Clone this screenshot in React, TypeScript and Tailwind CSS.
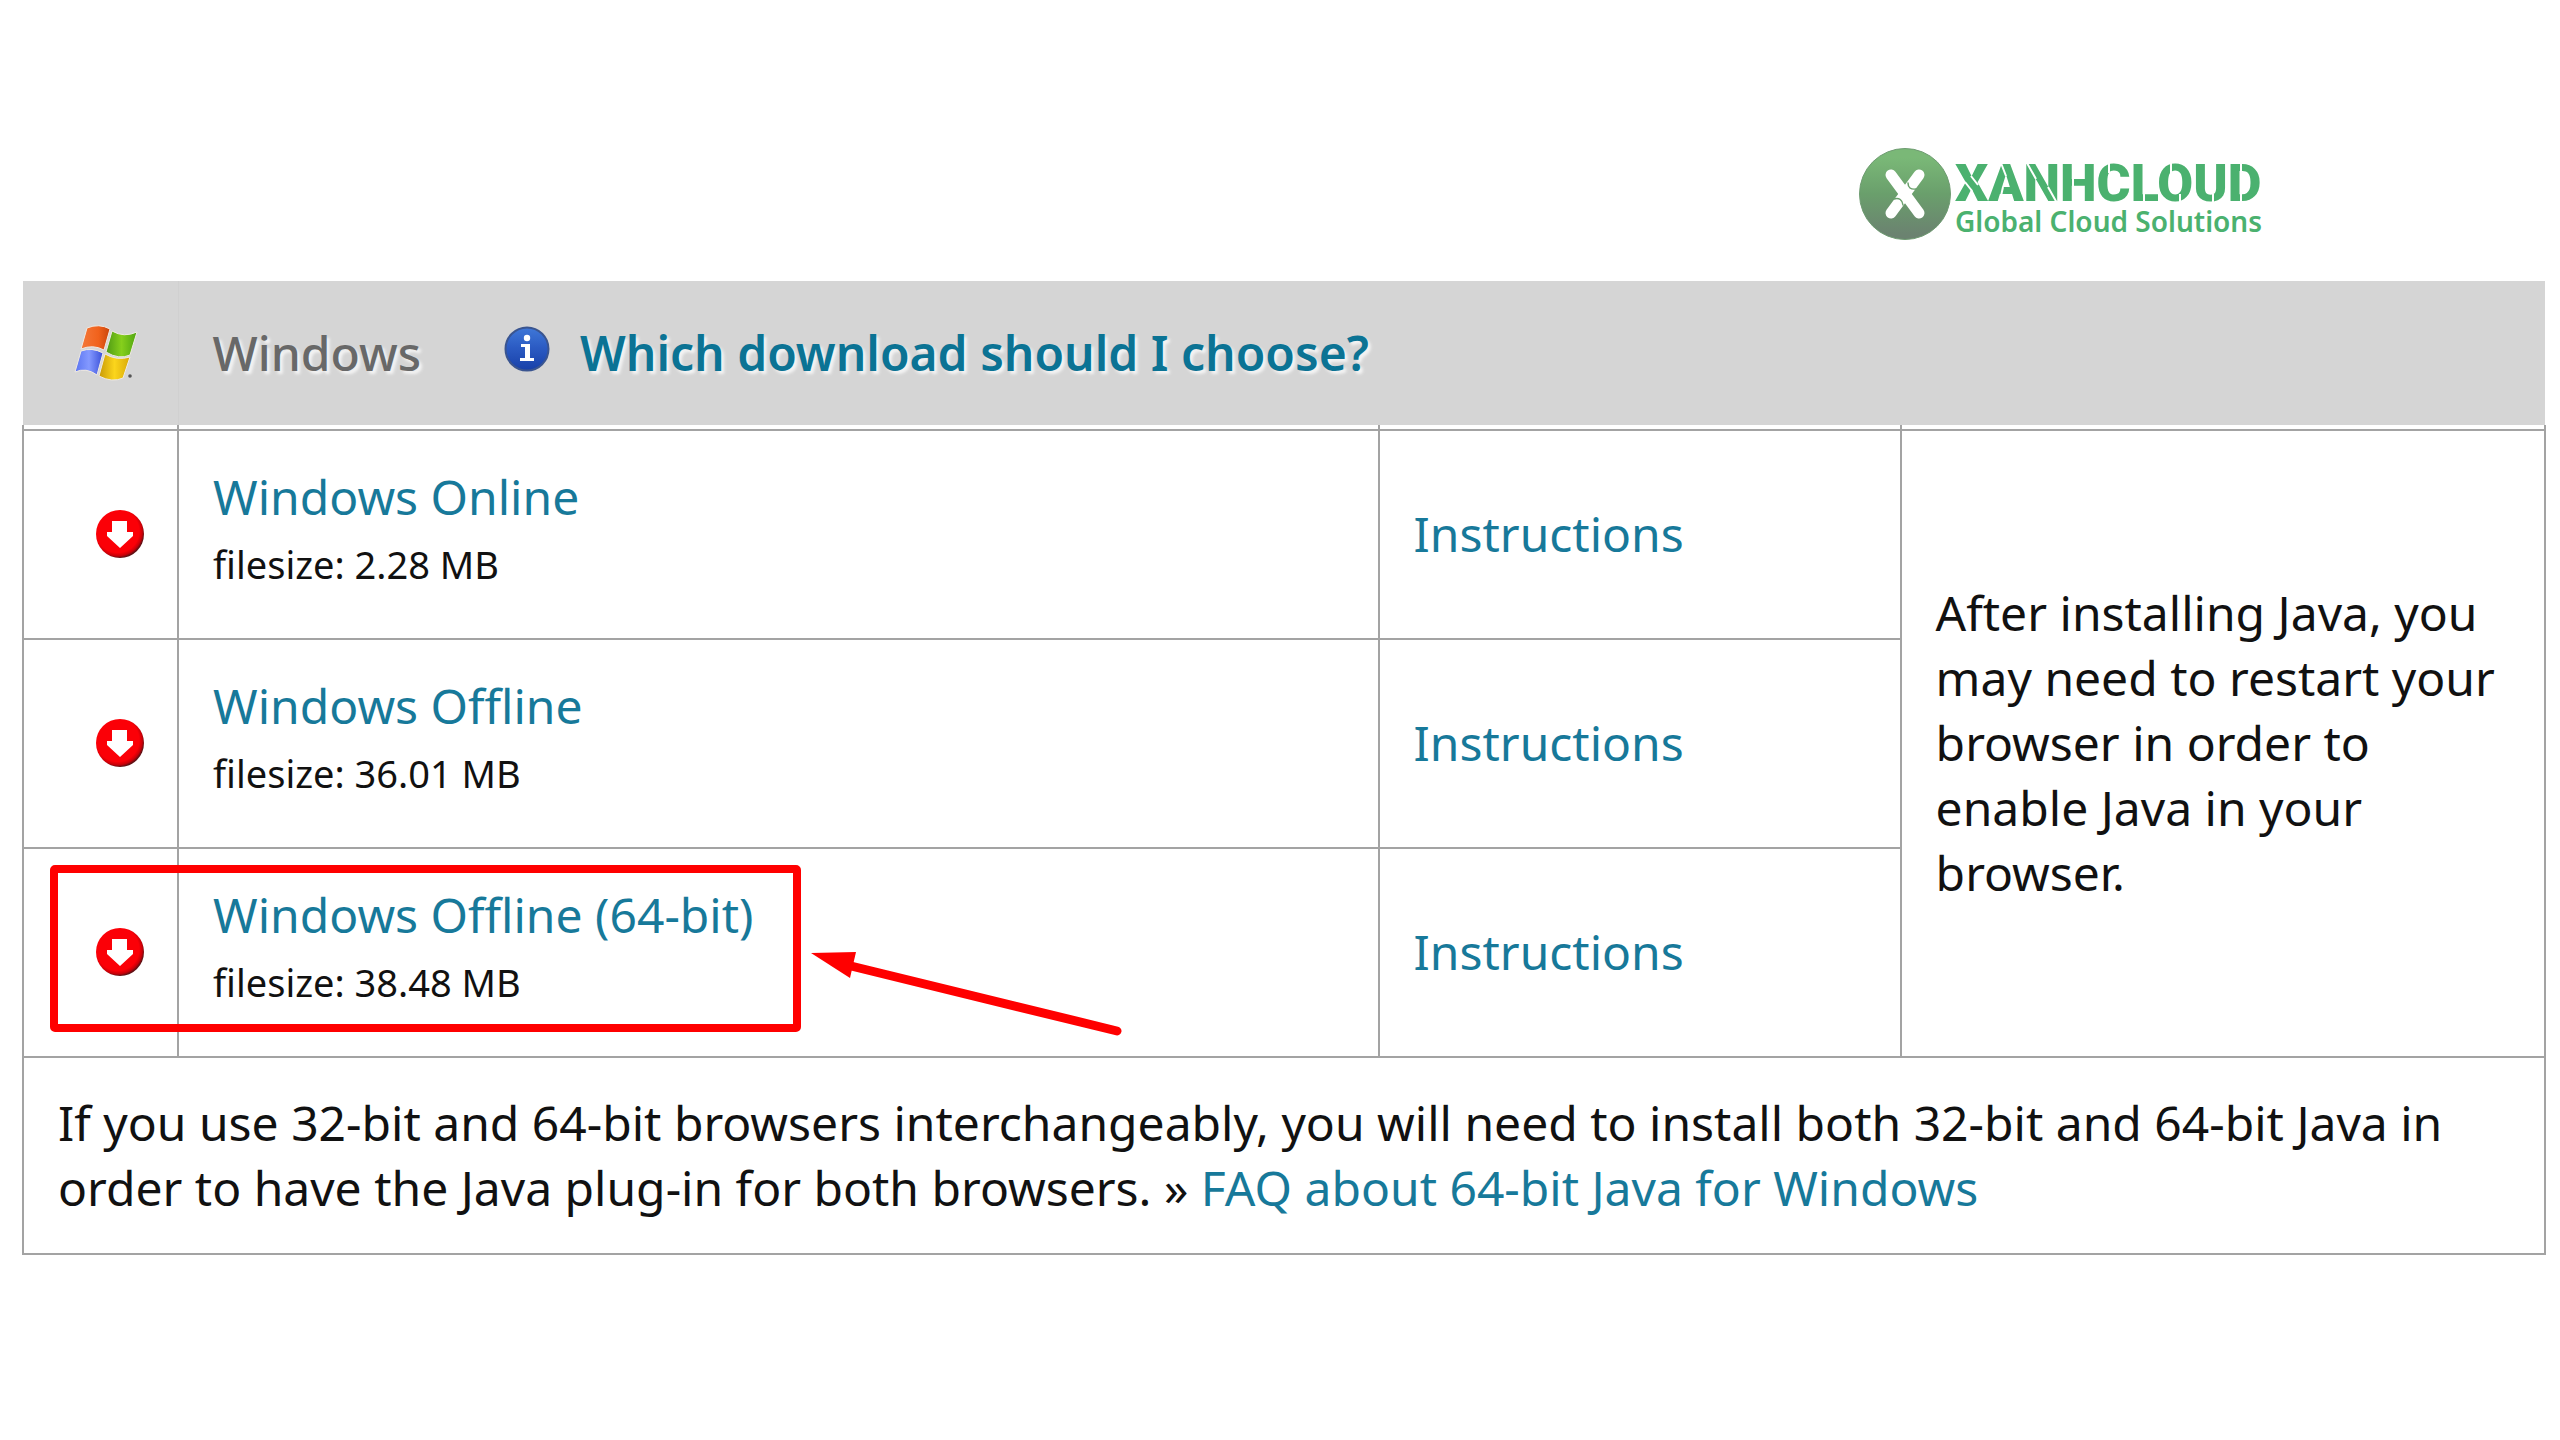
import React from 'react';

const downloads = [
  { name: 'Windows Online', size: 'filesize: 2.28 MB', marked: false },
  { name: 'Windows Offline', size: 'filesize: 36.01 MB', marked: false },
  { name: 'Windows Offline (64-bit)', size: 'filesize: 38.48 MB', marked: true },
];

function BrandLogo() {
  return (
    <a href="#home" className="flex items-center gap-1 text-[#4bb16f]">
      <svg viewBox="0 0 92 92" className="size-[92px] shrink-0" aria-hidden="true">
        <defs>
          <linearGradient id="disc" x1="0" y1="0" x2="0" y2="1">
            <stop offset="0.1" stopColor="#7ab877" />
            <stop offset="0.5" stopColor="#6a9f6c" />
            <stop offset="0.95" stopColor="#6b8270" />
          </linearGradient>
        </defs>
        <circle cx="46" cy="46" r="45.5" fill="url(#disc)" stroke="#6f9c72" strokeWidth="1" />
        <g strokeLinecap="round" fill="none">
          <path d="M60 27 32 65" stroke="#fff" strokeWidth="11" />
          <path d="M49 35Q49 42 57 41M35 51Q43 49 44 57" stroke="#6a9f6c" strokeWidth="1.5" />
          <path d="M32 27 60 65" stroke="#fff" strokeWidth="11" />
        </g>
      </svg>
      <span className="flex flex-col pt-2">
        <span className="relative font-['Roboto'] text-[52px] leading-[46px] font-black">
          XANHCLOUD
          {/* stencil gaps */}
          <svg viewBox="0 7 304 46" className="absolute top-0 left-0 h-[46px] w-[304px]" fill="none" stroke="#fff" strokeWidth="2" aria-hidden="true">
            <path d="M16 22 23 31M10 28 17 37M46 9 51 22M48 33 46 42M72 9 81 25M93 33 102 49M118 24V34M154 9V19M189 40V49M216 9V19M225 40V50M258 40V50M286 9V19M286 40V49" />
          </svg>
        </span>
        <span className="font-['Noto_Sans'] text-[28px] leading-7 font-semibold">Global Cloud Solutions</span>
      </span>
    </a>
  );
}

function WindowsFlag() {
  return (
    <svg viewBox="0 0 64 56" className="ml-auto h-14 w-16" aria-hidden="true">
      <defs>
        <linearGradient id="flagRed"><stop stopColor="#f4783a" /><stop offset="0.6" stopColor="#f1621c" /><stop offset="1" stopColor="#c8440c" /></linearGradient>
        <linearGradient id="flagGreen"><stop stopColor="#4e9a14" /><stop offset="0.5" stopColor="#86cf1c" /><stop offset="1" stopColor="#4fa510" /></linearGradient>
        <linearGradient id="flagBlue"><stop stopColor="#5a74f0" /><stop offset="0.5" stopColor="#8499ff" /><stop offset="1" stopColor="#3a50d8" /></linearGradient>
        <linearGradient id="flagGold"><stop stopColor="#c99a08" /><stop offset="0.5" stopColor="#fbd51c" /><stop offset="1" stopColor="#d8a908" /></linearGradient>
      </defs>
      <g stroke="#efe9e2" strokeWidth="1" strokeLinejoin="round">
        <path d="M13 3Q25-2 36 4L30 25Q19 19 7 24Z" fill="url(#flagRed)" />
        <path d="M38 6Q50 13 63 7L56 30Q45 35 32 27Z" fill="url(#flagGreen)" />
        <path d="M7 26Q18 22 29 28L23 50Q12 42 1 47Z" fill="url(#flagBlue)" />
        <path d="M31 29Q43 36 56 32L49 53Q38 58 25 51Z" fill="url(#flagGold)" />
      </g>
      <circle cx="56" cy="51" r="1.8" fill="#555" />
    </svg>
  );
}

function InfoIcon() {
  return (
    <svg viewBox="0 0 46 46" className="mb-1.5 size-[46px] shrink-0" aria-hidden="true">
      <defs>
        <linearGradient id="info" x1="0" y1="0" x2="0" y2="1">
          <stop stopColor="#3f78d8" />
          <stop offset="0.45" stopColor="#2c5cc4" />
          <stop offset="1" stopColor="#1840a8" />
        </linearGradient>
      </defs>
      <circle cx="23" cy="23" r="21.5" fill="url(#info)" stroke="#3a5590" strokeWidth="2" />
      <circle cx="23" cy="12" r="3.2" fill="#fff" />
      <path d="M17 18H26V32H30V35H16V32H21V21H17Z" fill="#fff" />
    </svg>
  );
}

function DownloadIcon() {
  return (
    <svg viewBox="0 0 50 50" className="size-[50px]" aria-hidden="true">
      <defs>
        <radialGradient id="shade" cx="0.45" cy="0.44" r="0.56">
          <stop offset="0.8" stopColor="#fb0007" />
          <stop offset="0.92" stopColor="#c80008" />
          <stop offset="1" stopColor="#5d1013" />
        </radialGradient>
      </defs>
      <circle cx="25" cy="25" r="24" fill="url(#shade)" />
      <path d="M17 12H32V23H38V27L25 39 12 27V23H17Z" fill="#fff" />
    </svg>
  );
}

function Highlight() {
  return (
    <>
      <span className="pointer-events-none absolute top-4 -left-[129px] h-[167px] w-[751px] rounded-[5px] border-8 border-[#ff0000]" />
      <svg viewBox="0 0 312 86" className="pointer-events-none absolute top-[103px] left-[632px] h-[86px] w-[312px]" aria-hidden="true">
        <path d="M40 14 306 79" stroke="#ff0000" strokeWidth="9" strokeLinecap="round" />
        <path d="M0 1 45 0 39 26Z" fill="#ff0000" />
      </svg>
    </>
  );
}

export default function App() {
  return (
    <div className="min-h-screen bg-white font-['Noto_Sans','Open_Sans',sans-serif] text-[48px] leading-[65px] text-[#111]">
      <header className="flex justify-end pt-[148px] pr-[298px] pb-[41px]">
        <BrandLogo />
      </header>
      <main className="pr-3.5 pl-[22px]">
        <table className="w-full table-fixed border-collapse">
          <colgroup>
            <col className="w-[6.15%]" />
            <col className="w-[47.6%]" />
            <col className="w-[20.7%]" />
            <col />
          </colgroup>
          <thead>
            <tr className="h-[144px] bg-[#d5d5d5]">
              <th className="border-r border-[#d0d0d0] pr-10">
                <WindowsFlag />
              </th>
              <th colSpan={3} className="pb-0.5 pl-[34px] text-left font-medium">
                <div className="flex items-center text-shadow-[3px_3px_3px_#f4f4f4]">
                  <span className="mr-[83px] text-[#686868]">Windows</span>
                  <InfoIcon />
                  <a href="#which" className="ml-[30px] font-semibold text-[#0b7394]">Which download should I choose?</a>
                </div>
              </th>
            </tr>
          </thead>
          <tbody>
            <tr className="h-[5px]" aria-hidden="true">
              <td className="border-x-2 border-[#a3a3a3]" />
              <td className="border-x-2 border-[#a3a3a3]" />
              <td className="border-x-2 border-[#a3a3a3]" />
              <td className="border-x-2 border-[#a3a3a3]" />
            </tr>
            {downloads.map((d, i) => (
              <tr key={d.name}>
                <td className="border-2 border-[#a3a3a3] pr-8 pb-0.5">
                  <a href="#download" aria-label={'Download ' + d.name} className="flex justify-end">
                    <DownloadIcon />
                  </a>
                </td>
                <td className="relative border-2 border-[#a3a3a3] pt-[33px] pb-[41px] pl-[34px]">
                  <a href="#download" className="block text-[#17799a]">{d.name}</a>
                  <div className="pt-[3px] text-[38px]">{d.size}</div>
                  {d.marked && <Highlight />}
                </td>
                <td className="border-2 border-[#a3a3a3] pb-0.5 pl-[34px]">
                  <a href="#instructions" className="text-[#17799a]">Instructions</a>
                </td>
                {i === 0 && (
                  <td rowSpan={3} className="border-2 border-[#a3a3a3] pr-10 pb-0.5 pl-[34px]">
                    After installing Java, you may need to restart your browser in order to enable Java in your browser.
                  </td>
                )}
              </tr>
            ))}
            <tr>
              <td colSpan={4} className="border-2 border-[#a3a3a3] px-[34px] pt-8 pb-[33px]">
                If you use 32-bit and 64-bit browsers interchangeably, you will need to install both 32-bit and 64-bit Java in order to have the Java plug-in for both browsers. »{' '}
                <a href="#faq" className="text-[#17799a]">FAQ about 64-bit Java for Windows</a>
              </td>
            </tr>
          </tbody>
        </table>
      </main>
    </div>
  );
}
